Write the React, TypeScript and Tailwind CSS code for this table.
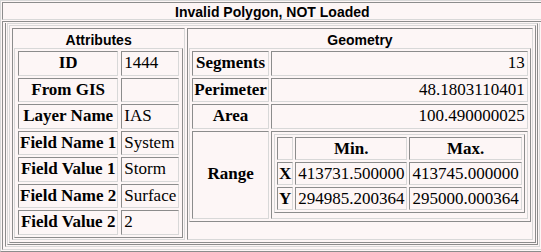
import React from 'react';

const inset = 'border border-t-[#8c8c8c] border-l-[#8c8c8c] border-r-[#d8d8d8] border-b-[#d8d8d8]';
const outset = 'border border-t-[#d8d8d8] border-l-[#d8d8d8] border-r-[#8c8c8c] border-b-[#8c8c8c]';
const serif = "font-['Liberation_Serif',serif] text-[17px]";
const sans = "font-['Liberation_Sans',Arial,sans-serif] text-[14px] font-bold";

const attributes = [
  ['ID', '1444'],
  ['From GIS', ''],
  ['Layer Name', 'IAS'],
  ['Field Name 1', 'System'],
  ['Field Value 1', 'Storm'],
  ['Field Name 2', 'Surface'],
  ['Field Value 2', '2'],
];

const geometry = [
  ['Segments', '13'],
  ['Perimeter', '48.1803110401'],
  ['Area', '100.490000025'],
];

function Label({ children, tight }: { children: React.ReactNode; tight?: boolean }) {
  return (
    <th className={`${inset} ${serif} ${tight ? 'leading-[17px]' : 'leading-[18.5px]'} font-bold text-center whitespace-nowrap px-px py-[2px]`}>
      {children}
    </th>
  );
}

function Value({ children, right, tight }: { children: React.ReactNode; right?: boolean; tight?: boolean }) {
  return (
    <td className={`${inset} ${serif} ${tight ? 'leading-[17px]' : 'leading-[18.5px]'} ${right ? 'text-right' : 'text-left'} whitespace-nowrap p-[2px]`}>
      {children}
    </td>
  );
}

function RangeTable() {
  return (
    <table className={`${outset} border-separate border-spacing-[2px]`}>
      <tbody>
        <tr>
          <td className={`${inset} px-[7px]`}></td>
          <Label tight>Min.</Label>
          <Label tight>Max.</Label>
        </tr>
        <tr>
          <Label tight>X</Label>
          <Value tight>413731.500000</Value>
          <Value tight>413745.000000</Value>
        </tr>
        <tr>
          <Label tight>Y</Label>
          <Value tight>294985.200364</Value>
          <Value tight>295000.000364</Value>
        </tr>
      </tbody>
    </table>
  );
}

function Section({ title, children, grow }: { title: string; children: React.ReactNode; grow?: boolean }) {
  return (
    <td className={`${inset} p-px align-top ${grow ? 'w-full' : ''}`}>
      <div className={`${sans} leading-[16px] text-center pt-[2px]`}>{title}</div>
      {children}
    </td>
  );
}

export default function App() {
  return (
    <div className="w-[541px] h-[252px] bg-[#fdf6f6] text-black overflow-hidden">
      <table className={`${outset} w-full border-separate border-spacing-[1px]`}>
        <tbody>
          <tr>
            <th className={`${inset} ${sans} leading-[14px] pt-[2px] pb-0 px-px`}>Invalid Polygon, NOT Loaded</th>
          </tr>
          <tr>
            <td className={`${inset} pt-px px-[2px] pb-[2px]`}>
              <div className="border border-t-0 border-l-[#8c8c8c] border-r-[#d8d8d8] border-b-[#d8d8d8] px-px pb-px">
                <div className="border border-t-[#d8d8d8] border-l-[#d8d8d8] border-r-[#8c8c8c] border-b-[#8c8c8c] p-px">
                  <table className={`${outset} w-full border-separate border-spacing-[2px]`}>
                    <tbody>
                      <tr>
                        <Section title="Attributes">
                          <table className={`${outset} border-separate border-spacing-x-[3px] border-spacing-y-[2px]`}>
                            <tbody>
                              {attributes.map(([k, v]) => (
                                <tr key={k}>
                                  <Label>{k}</Label>
                                  <Value>{v}</Value>
                                </tr>
                              ))}
                            </tbody>
                          </table>
                        </Section>
                        <Section title="Geometry" grow>
                          <table className={`${outset} w-full border-separate border-spacing-[2px]`}>
                            <tbody>
                              {geometry.map(([k, v]) => (
                                <tr key={k}>
                                  <Label>{k}</Label>
                                  <td className={`${inset} ${serif} leading-[18.5px] text-right whitespace-nowrap p-[2px] w-full`}>{v}</td>
                                </tr>
                              ))}
                              <tr>
                                <Label>Range</Label>
                                <td className={`${inset} pt-[2px] pl-[2px] pr-[2px] pb-[5px]`}>
                                  <RangeTable />
                                </td>
                              </tr>
                            </tbody>
                          </table>
                        </Section>
                      </tr>
                    </tbody>
                  </table>
                </div>
              </div>
            </td>
          </tr>
        </tbody>
      </table>
    </div>
  );
}
